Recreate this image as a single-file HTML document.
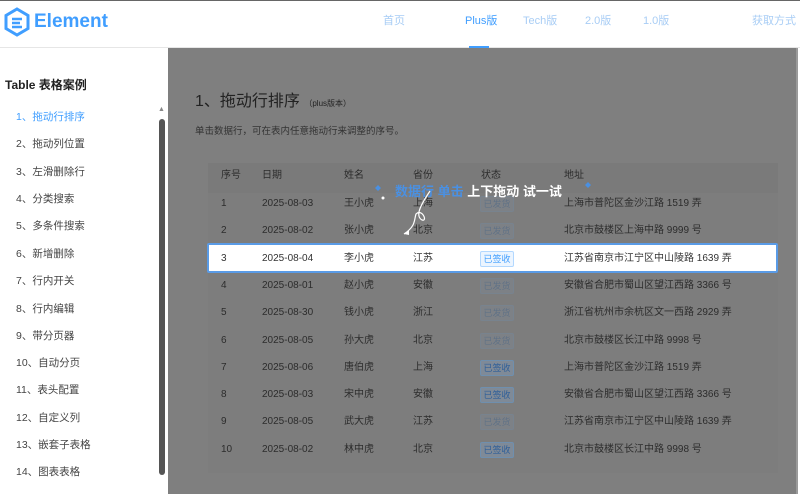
<!DOCTYPE html><html><head><meta charset="utf-8"><style>
*{margin:0;padding:0;box-sizing:border-box}
body{width:800px;height:493px;overflow:hidden;background:#fff;font-family:"Liberation Sans","Noto Sans CJK SC",sans-serif;position:relative;border-top:1px solid #666}
.hd{position:absolute;left:0;top:1px;width:800px;height:46px;background:#fff;border-bottom:1px solid #e6e6e6}
.logo{position:absolute;left:3px;top:5px}
.logo span{position:absolute;left:31px;top:3px;font-size:19px;font-weight:bold;line-height:24px;color:#409eff;font-family:"Liberation Sans",sans-serif}
.nav{position:absolute;top:12px;font-size:11px;line-height:14px;color:#a8cdf5}
.side{position:absolute;left:0;top:47px;width:168px;height:446px;background:#fff}
.side h3{position:absolute;left:5px;top:28px;font-size:12px;color:#222}
.side .it{position:absolute;left:16px;font-size:10.5px;line-height:14px;color:#444}
.sb{position:absolute;left:159px;top:118px;width:6px;height:356px;background:#555;border-radius:3px}
.main{position:absolute;left:168px;top:47px;width:630px;height:446px;background:#7f7f7f;border-right:2px solid #9a9a9a}
.t{position:absolute;font-size:10px;line-height:14px;color:#2c2c2c;white-space:nowrap}
.tag{position:absolute;width:34px;height:16px;border:1px solid #6f8fae;background:#7f8a97;font-size:9px;color:#2f5f99;text-align:center;line-height:14px;border-radius:2px}
</style></head><body>
<div class="hd">
<div class="logo"><svg width="28" height="30" viewBox="0 0 28 30"><path d="M14 2 L25 8.5 V21.5 L14 28 L3 21.5 V8.5 Z" fill="none" stroke="#409eff" stroke-width="3"/><path d="M9 12 H19 M9 16 H17 M9 20 H19" stroke="#409eff" stroke-width="2.5"/></svg><span>Element</span></div>
<div class="nav" style="left:383px">首页</div>
<div class="nav" style="left:465px;color:#409eff">Plus版</div>
<div style="position:absolute;left:469px;top:44px;width:20px;height:2px;background:#409eff"></div>
<div class="nav" style="left:523px">Tech版</div>
<div class="nav" style="left:585px">2.0版</div>
<div class="nav" style="left:643px">1.0版</div>
<div class="nav" style="left:752px">获取方式</div>
</div>
<div class="side"><h3>Table 表格案例</h3>
<div class="it" style="top:62px;color:#409eff">1、拖动行排序</div>
<div class="it" style="top:89px">2、拖动列位置</div>
<div class="it" style="top:117px">3、左滑删除行</div>
<div class="it" style="top:144px">4、分类搜索</div>
<div class="it" style="top:171px">5、多条件搜索</div>
<div class="it" style="top:199px">6、新增删除</div>
<div class="it" style="top:226px">7、行内开关</div>
<div class="it" style="top:254px">8、行内编辑</div>
<div class="it" style="top:281px">9、带分页器</div>
<div class="it" style="top:308px">10、自动分页</div>
<div class="it" style="top:335px">11、表头配置</div>
<div class="it" style="top:363px">12、自定义列</div>
<div class="it" style="top:390px">13、嵌套子表格</div>
<div class="it" style="top:417px">14、图表表格</div>
<div style="position:absolute;left:158px;top:58px;font-size:7px;color:#888">▲</div>
</div>
<div class="sb"></div>
<div class="main">
<div class="t" style="left:27px;top:44px;font-size:16px;line-height:20px;color:#222">1、拖动行排序 <span style="font-size:8px">（plus版本）</span></div>
<div class="t" style="left:27px;top:77px;font-size:9.5px;color:#333">单击数据行，可在表内任意拖动行来调整的序号。</div>
<div style="position:absolute;left:40px;top:115px;width:570px;height:30px;background:#7a7a7a"></div>
<div style="position:absolute;left:40px;top:145px;width:570px;height:280px;background:#7d7d7d"></div>
</div>
<div style="position:absolute;left:207px;top:242px;width:571px;height:30px;background:#fff;border:2px solid #5a9be6;border-radius:2px"></div>
<div id="rows"></div>
<div class="t" style="left:395px;top:183px;font-size:13px;line-height:16px;font-weight:bold;color:#4a90e2">数据行 单击 <span style="color:#fff">上下拖动 试一试</span></div>
<svg style="position:absolute;left:370px;top:175px" width="230" height="70"><path d="M8 9 l3 3 l-3 3 l-3 -3z M218 6 l3 3 l-3 3 l-3 -3z" fill="#4a90e2"/><circle cx="13" cy="22" r="1.5" fill="#fff"/><path d="M60 15 C50 30 45 40 52 44 C58 46 52 32 46 38 C44 44 46 50 34 58" fill="none" stroke="#fff" stroke-width="1.2"/><path d="M34 58 l5 -4 l0 5z" fill="#fff"/></svg>
<script>
var d=[["序号","日期","姓名","省份","状态","地址"],
["1","2025-08-03","王小虎","上海","","上海市普陀区金沙江路 1519 弄"],
["2","2025-08-02","张小虎","北京","","北京市鼓楼区上海中路 9999 号"],
["3","2025-08-04","李小虎","江苏","已签收","江苏省南京市江宁区中山陵路 1639 弄"],
["4","2025-08-01","赵小虎","安徽","","安徽省合肥市蜀山区望江西路 3366 号"],
["5","2025-08-30","钱小虎","浙江","","浙江省杭州市余杭区文一西路 2929 弄"],
["6","2025-08-05","孙大虎","北京","","北京市鼓楼区长江中路 9998 号"],
["7","2025-08-06","唐伯虎","上海","已签收","上海市普陀区金沙江路 1519 弄"],
["8","2025-08-03","宋中虎","安徽","已签收","安徽省合肥市蜀山区望江西路 3366 号"],
["9","2025-08-05","武大虎","江苏","","江苏省南京市江宁区中山陵路 1639 弄"],
["10","2025-08-02","林中虎","北京","已签收","北京市鼓楼区长江中路 9998 号"]];
var xs=[221,262,344,413,481,564],h="";
d.forEach(function(r,i){var y=(i==0?175:203+(i-1)*27.3)-7;
r.forEach(function(c,j){
 if(j==4&&i>0){h+='<div class="tag" style="left:480px;top:'+(y-1)+'px;'+(i==3?'background:#ecf5ff;border-color:#b3d8ff;color:#409eff':(c?'':'opacity:.35'))+'">'+(c||'已发货')+'</div>';}
 else h+='<div class="t" style="left:'+xs[j]+'px;top:'+y+'px;'+(i==3?'color:#333':'')+'">'+c+'</div>';});});
document.getElementById('rows').innerHTML=h;
</script>
</body></html>
